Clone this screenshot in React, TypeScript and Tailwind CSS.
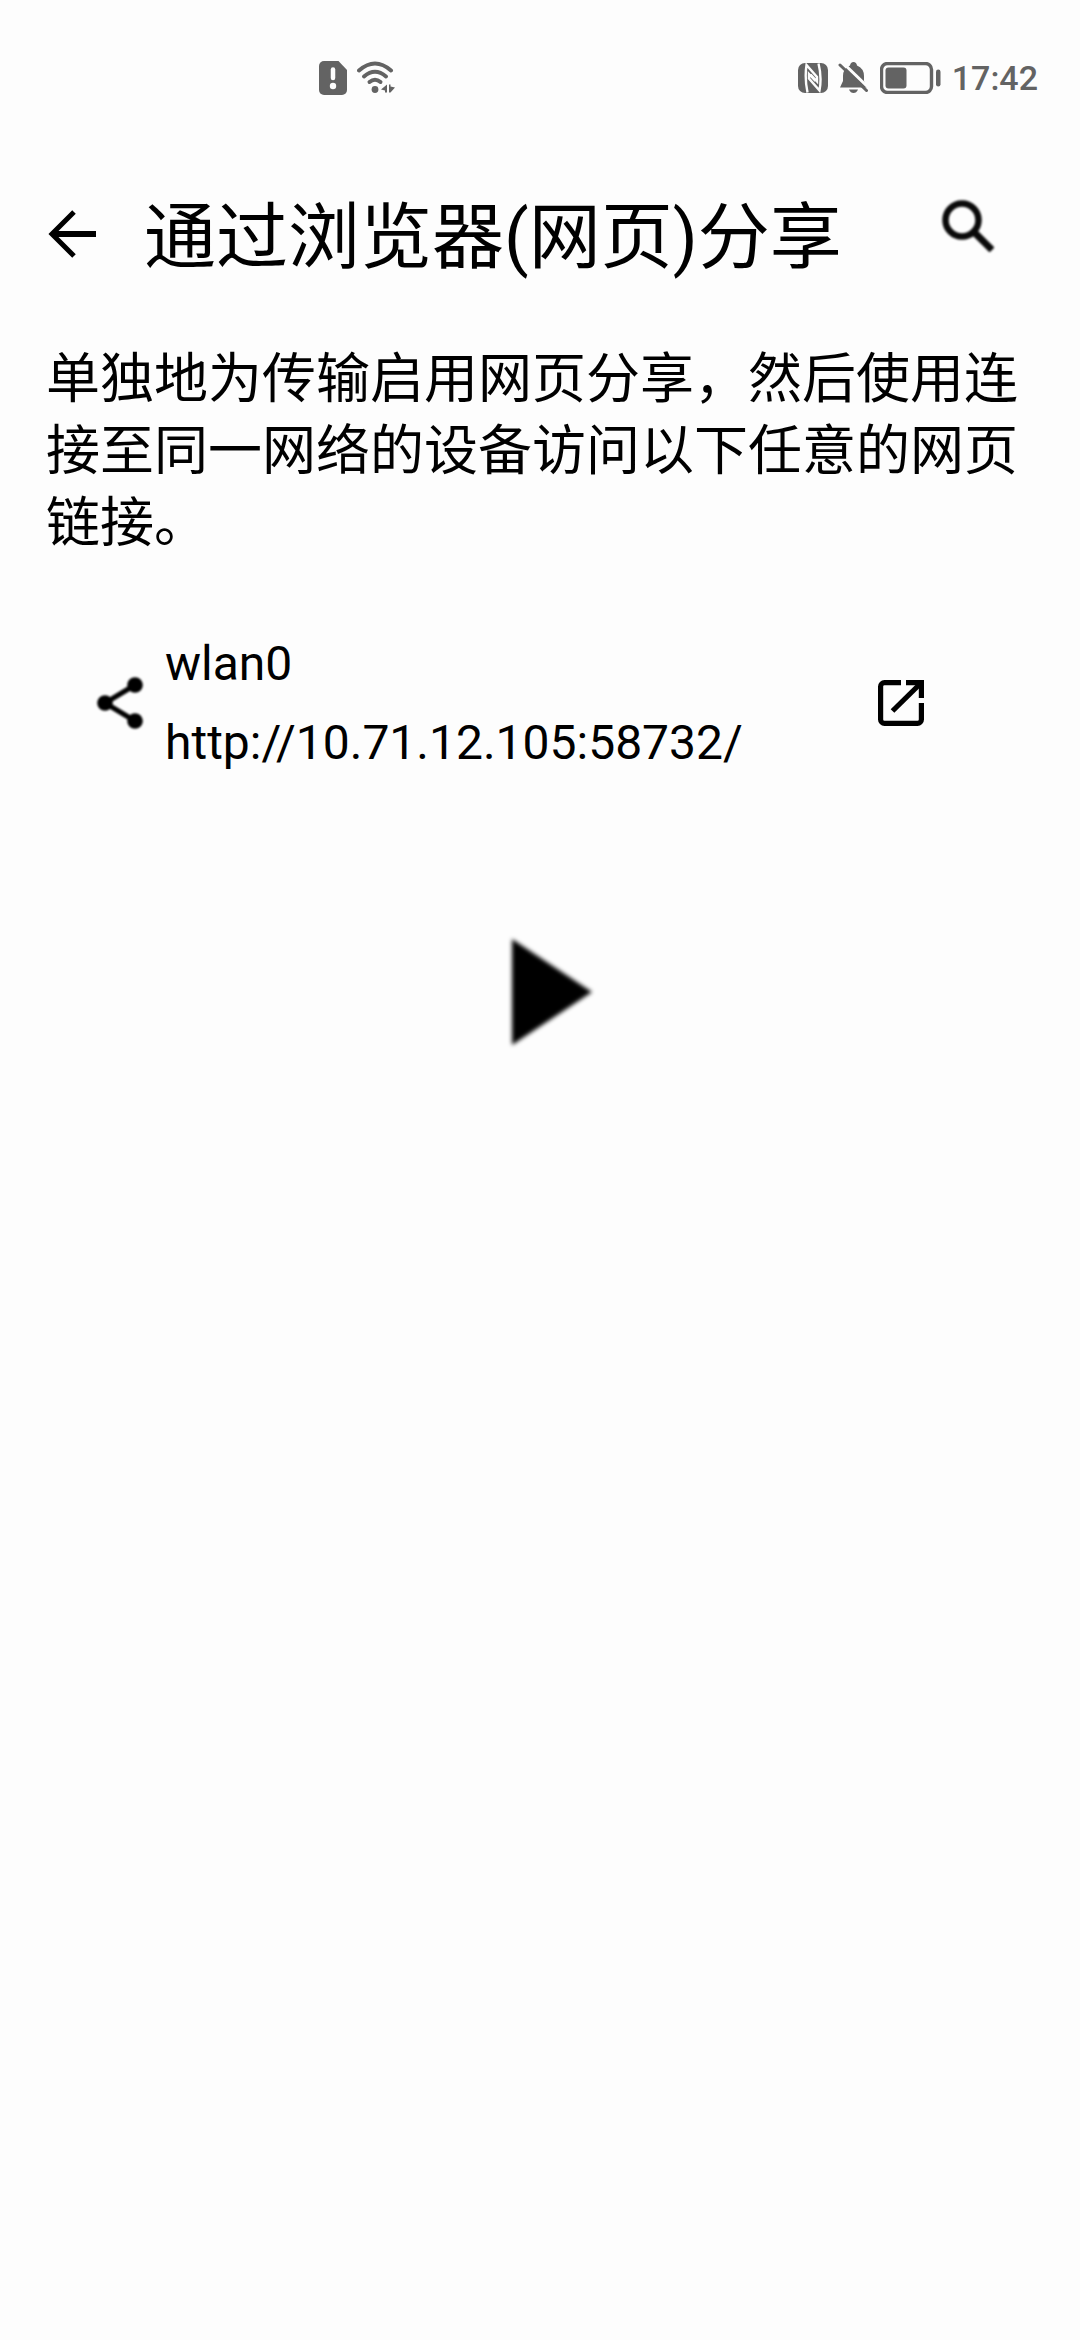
function StatusBar() {
  return (
    <div className="flex h-[156px] items-center justify-between pr-[42px] pl-[319px] text-[#636363]">
      <div className="flex items-center gap-2.5">
        <svg width="28" height="34" viewBox="0 0 28 34" role="img" aria-label="SIM 卡异常">
          <path d="M5 0H19.500L28 9V29a5 5 0 0 1-5 5H5a5 5 0 0 1-5-5V5a5 5 0 0 1 5-5Z" fill="currentColor" />
          <path d="M14 8.500V17" stroke="#fdfdfd" strokeWidth="4.500" strokeLinecap="round" />
          <circle cx="14" cy="25" r="3.200" fill="#fdfdfd" />
        </svg>
        <svg width="38" height="34" viewBox="0 0 38 34" role="img" aria-label="WLAN">
          <g fill="none" stroke="currentColor" strokeWidth="4" strokeLinecap="round">
            <path d="M2 9.500Q18 -4.500 34 9.500" />
            <path d="M7 15.500Q18 6 29 15.500" />
            <path d="M12.500 21Q18 16.500 23.500 21" />
          </g>
          <circle cx="18" cy="28.500" r="3.400" fill="currentColor" />
          <path d="M30 23.500V31.500H28V29.500L24 28.500ZM32 23.500H33.500V25.500L38 26.500L33.500 31.500H32Z" fill="currentColor" />
        </svg>
      </div>
      <div className="flex items-center gap-2.5">
        <svg width="30" height="30" viewBox="0 0 30 30" role="img" aria-label="NFC">
          <rect width="30" height="30" rx="7" fill="currentColor" />
          <g fill="none" stroke="#fdfdfd" strokeWidth="2.400">
            <path d="M9.500 29.500Q6.500 15 8.500 2L19 14V18.500L12.500 11.500" />
            <path d="M20.500 0.500Q24 14 21.500 27.500L11 15.500V11L17.500 18" />
          </g>
        </svg>
        <svg width="32" height="32" viewBox="0 0 32 32" role="img" aria-label="静音">
          <path d="M12 3.500Q12.500 0 15.500 0T19 3.500Q26 6.500 26 14V19L29 25.500H2L5 19V14Q5 6.500 12 3.500Z" fill="currentColor" />
          <path d="M11 27.500H20Q18.500 31 15.500 31T11 27.500Z" fill="currentColor" />
          <path d="M4 0L33 28" stroke="#fdfdfd" strokeWidth="3" />
          <path d="M2 3L28.500 28.500" stroke="currentColor" strokeWidth="3" strokeLinecap="round" />
        </svg>
        <svg width="62" height="32" viewBox="0 0 62 32" role="img" aria-label="电量 40%">
          <rect x="1.500" y="1.500" width="50" height="29" rx="6" fill="none" stroke="currentColor" strokeWidth="3.400" />
          <rect x="5.500" y="5.500" width="21" height="21" rx="3" fill="currentColor" />
          <rect x="56" y="7.500" width="4.500" height="17" rx="2.250" fill="currentColor" />
        </svg>
        <span className="text-[34px] leading-10 font-medium">17:42</span>
      </div>
    </div>
  );
}

function Header() {
  return (
    <header className="flex h-[156px] items-center pl-12">
      <button type="button" aria-label="返回" className="flex h-24 w-24 items-center">
        <svg width="48" height="48" viewBox="0 0 48 48" fill="none" stroke="black" strokeWidth="6">
          <path d="M48 24H4" />
          <path d="M26 2L4 24L26 46" strokeWidth="5" />
        </svg>
      </button>
      <h1 className="flex-1 pt-2 text-7xl leading-[84px]">通过浏览器(网页)分享</h1>
      <button type="button" aria-label="搜索" className="mr-16 mb-4 flex h-24 w-24 items-center justify-center">
        <svg width="52" height="52" viewBox="0 0 52 52" fill="none" stroke="#0a0a0a" className="blur-[1px]">
          <circle cx="20" cy="20" r="16.500" strokeWidth="6.500" />
          <path d="M32 32L50 50" strokeWidth="7" />
        </svg>
      </button>
    </header>
  );
}

function ShareLink() {
  return (
    <section className="flex items-center pr-[139px] pl-[89px]">
      <button type="button" aria-label="分享" className="flex h-20 w-[76px] items-center pl-2">
        <svg width="46" height="52" viewBox="0 0 46 52" className="blur-[1px]">
          <path d="M38 8L8 26L38 44" fill="none" stroke="black" strokeWidth="5" />
          <circle cx="38" cy="8" r="7.800" />
          <circle cx="8" cy="26" r="7.800" />
          <circle cx="38" cy="44" r="7.800" />
        </svg>
      </button>
      <div className="flex flex-1 flex-col text-5xl">
        <span className="leading-[79px]">wlan0</span>
        <a href="http://10.71.12.105:58732/" className="leading-[79px]">
          http://10.71.12.105:58732/
        </a>
      </div>
      <button type="button" aria-label="在浏览器中打开" className="flex h-20 w-20 items-center justify-center">
        <svg width="46" height="46" viewBox="0 0 46 46" fill="none" stroke="black" strokeWidth="5.200">
          <path d="M23 2.600H6.500a3.900 3.900 0 0 0-3.900 3.900V39.500a3.900 3.900 0 0 0 3.900 3.900H39.500a3.900 3.900 0 0 0 3.900-3.900V23" />
          <path d="M28 2.600H43.400V18" />
          <path d="M43 3L14.500 31" />
        </svg>
      </button>
    </section>
  );
}

export default function App() {
  return (
    <main
      lang="zh-CN"
      className="flex min-h-screen flex-col bg-[#fdfdfd] font-['Roboto','Noto_Sans_CJK_SC',sans-serif] text-black"
    >
      <StatusBar />
      <Header />
      <p className="mt-8 px-[46px] text-[54px] leading-[72px]">
        单独地为传输启用网页分享，然后使用连接至同一网络的设备访问以下任意的网页链接。
      </p>
      <div className="mt-16">
        <ShareLink />
      </div>
      <button type="button" aria-label="开始" className="mt-[156px] ml-6 self-center">
        <svg width="84" height="108" viewBox="0 0 84 108" className="blur-[2px]">
          <path d="M2 1L82 54L2 107Z" />
        </svg>
      </button>
    </main>
  );
}
